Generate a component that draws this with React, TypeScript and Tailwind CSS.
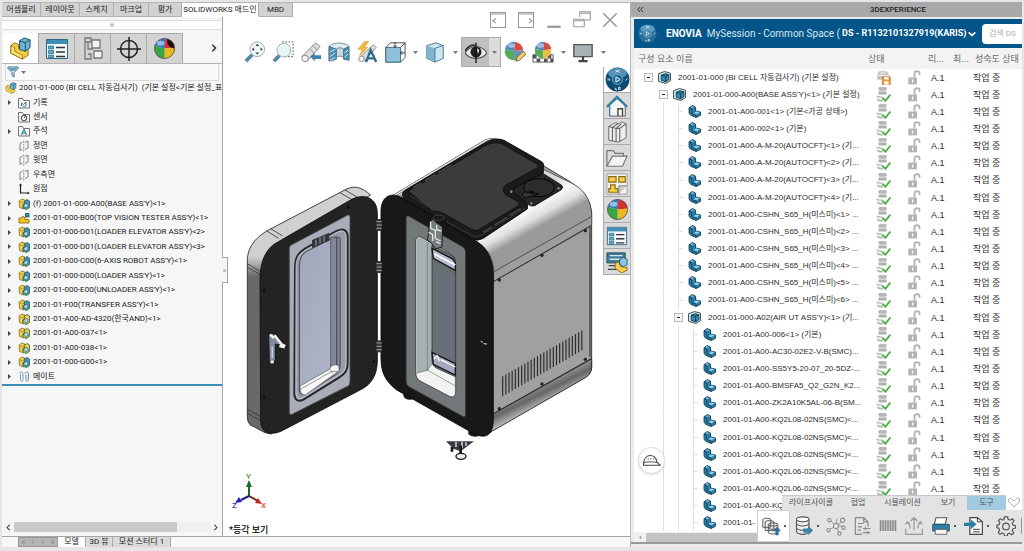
import type { ReactNode } from "react";

const sans = "font-['Roboto','Noto_Sans_CJK_KR',sans-serif]";
const arial = "font-['Liberation_Sans','Noto_Sans_CJK_KR',sans-serif]";

type IconProps = { size?: number; box?: string; children: ReactNode };

const Icon = ({ size = 24, box = "0 0 24 24", children }: IconProps) => (
  <svg
    width={size}
    height={size}
    viewBox={box}
    fill="none"
    className="block shrink-0"
    aria-hidden="true"
  >
    {children}
  </svg>
);

/* ---------- shared icons ---------- */

const PartIcon = ({ size = 24 }: { size?: number }) => (
  <Icon size={size}>
    <path d="M2 9l4-3 4 2v4l5 2 5-2v7l-6 4-12-6z" fill="#f5cf3c" stroke="#8a6d10" />
    <path d="M2 9l4 2v4l8 4v4L2 17z" fill="#fbe37a" stroke="#8a6d10" strokeWidth=".8" />
    <path d="M11 4l5-3 6 2v8l-5 4-6-2z" fill="#6db3d3" stroke="#1c4f6b" />
    <path d="M11 4l6 2v9M17 6l5-3" stroke="#1c4f6b" />
  </Icon>
);

const SubAssemblyIcon = ({ resolved }: { resolved?: boolean }) => (
  <Icon size={12}>
    <path d="M2 6l6-4 6 2 1 6-5 4 1 8-8-3z" fill="#f2cd45" stroke="#7b6318" strokeWidth="1.4" />
    <path d="M4 8l5 2 5-4" stroke="#7b6318" />
    <path d="M12 7l6-4 5 3v13l-6 4-7-3V13l4-1z" fill={resolved ? "#f2cd45" : "#3f94b5"} stroke="#1d4e60" strokeWidth="1.4" />
    <path d="M10 16l6-5 5 2-4 7z" fill="#a8d9ea" stroke="#1d4e60" />
    <path d="M14 22c4 0 7-2 8-6" stroke="#48a23b" strokeWidth="2" />
  </Icon>
);

const TopPartIcon = () => (
  <Icon size={12}>
    <path d="M2 12h5l3-4 4 4v3h8v7H2z" fill="#f2c21f" stroke="#7b6318" strokeWidth="1.6" />
    <path d="M15 3h7v7h-7z" fill="#3f94b5" stroke="#1d4e60" strokeWidth="1.6" />
    <path d="M14 11l4-4" stroke="#1d4e60" strokeWidth="2" />
  </Icon>
);

const FolderIcon = ({ mark }: { mark: "history" | "sensor" | "note" }) => (
  <Icon size={12}>
    <path d="M1 22V3h8l2 4h12v15z" fill="#f4f4f4" stroke="#666" strokeWidth="1.8" />
    {mark === "history" && (
      <path d="M7 18v-6l4 3 5-5v7a4 4 0 01-7 1" stroke="#3c7386" strokeWidth="2" />
    )}
    {mark === "sensor" && (
      <>
        <circle cx="12" cy="14" r="5.5" stroke="#444" strokeWidth="2" />
        <path d="M12 14l3-4" stroke="#444" strokeWidth="2" />
      </>
    )}
    {mark === "note" && (
      <path d="M7 20l5-11 5 11M9 16h6" stroke="#2c7fa0" strokeWidth="2.2" />
    )}
  </Icon>
);

const PlaneIcon = () => (
  <Icon size={12}>
    <path d="M9 4L4 7v14l5-3M14 5l6-3v14l-6 3" stroke="#666" strokeWidth="1.6" />
    <path d="M11.500 1v22" stroke="#666" strokeWidth="1.400" strokeDasharray="4 2" />
  </Icon>
);

const OriginIcon = () => (
  <Icon size={12}>
    <path d="M5 2v18h16" stroke="#222" strokeWidth="2.4" />
    <path d="M2 5l3-4 3 4M19 17l4 3-4 3" fill="#222" />
  </Icon>
);

const MateIcon = () => (
  <Icon size={12}>
    <path d="M3 5c0-4 7-4 7 0v12c0 5-5 5-5 0V7" stroke="#6fa0b8" strokeWidth="2" />
    <path d="M14 5c0-4 7-4 7 0v12c0 5-5 5-5 0V7" stroke="#6c8794" strokeWidth="2" />
  </Icon>
);

const Sphere = ({ size = 22, hole }: { size?: number; hole?: boolean }) => (
  <Icon size={size}>
    <path d="M12 12L2 9A10.500 10.500 0 0113 1.500z" fill="#2e77c9" />
    <path d="M12 12l1-10.500A10.500 10.500 0 0122.500 11z" fill="#d3322d" />
    <path d="M12 12l10.500-1A10.500 10.500 0 0112 22.500z" fill="#e9b920" />
    <path d="M12 12v10.500A10.500 10.500 0 012 9z" fill="#3aa344" />
    {hole && <path d="M15 2c6 2 8 6 7 10-5-1-8-5-7-10z" fill="#1d0f12" />}
    <circle cx="12" cy="12" r="10.500" stroke="#444" strokeWidth=".8" />
    <ellipse cx="8" cy="6.500" rx="4" ry="2.500" fill="#fff" opacity=".5" />
  </Icon>
);

const PropertiesIcon = ({ size = 24 }: { size?: number }) => (
  <Icon size={size}>
    <path d="M1.500 2.500h21v19h-21z" fill="#f4f8fa" stroke="#2b6480" />
    <path d="M2 3h20v4H2z" fill="#3f8fb3" />
    <path d="M3.500 9h5v3h-5zM3.500 13.500h5v3h-5zM3.500 18h5v2.500h-5z" fill="#5ba9c9" stroke="#2b6480" strokeWidth=".7" />
    <path d="M11 10.500h9M11 15h9M11 19.500h9" stroke="#333" strokeWidth="1.500" />
  </Icon>
);

const CompassIcon = ({ size = 24, muted }: { size?: number; muted?: boolean }) => (
  <Icon size={size}>
    <circle cx="12" cy="12" r="11.500" fill={muted ? "#2a6f9b" : "#0f4a70"} />
    <ellipse cx="12" cy="6" rx="9" ry="5" fill="#6fb0d2" opacity=".7" />
    <circle cx="12" cy="12" r="5" fill={muted ? "#3a80aa" : "#1c6b98"} stroke="#7fb9d6" strokeWidth=".7" />
    <path d="M10.500 9.500l4 2.500-4 2.500z" stroke="#fff" strokeWidth=".9" />
    <path d="M10 3l4 2M10 5l4-2M3 11v2M4.500 11v2M20 13l1.500-2M10 20v1.500h1.500M13 19.500h1.500V21.500H13z" stroke="#dceaf2" strokeWidth=".9" />
  </Icon>
);

const Caret = () => (
  <svg width="5" height="3" viewBox="0 0 5 3" aria-hidden="true">
    <path d="M0 0h5L2.500 3z" fill="#777" />
  </svg>
);

/* ---------- feature tree ---------- */

const commandTabs = ["어셈블리", "레이아웃", "스케치", "마크업", "평가", "SOLIDWORKS 애드인", "MBD"];
const commandTabWidths = ["w-[39px]", "w-[39px]", "w-[34px]", "w-[35px]", "w-[33px]", "w-[77px]", "w-[34px]"];

const treeRows: { label: string; icon: ReactNode; arrow?: boolean }[] = [
  { label: "기록", icon: <FolderIcon mark="history" />, arrow: true },
  { label: "센서", icon: <FolderIcon mark="sensor" /> },
  { label: "주석", icon: <FolderIcon mark="note" />, arrow: true },
  { label: "정면", icon: <PlaneIcon /> },
  { label: "윗면", icon: <PlaneIcon /> },
  { label: "우측면", icon: <PlaneIcon /> },
  { label: "원점", icon: <OriginIcon /> },
  { label: "(f) 2001-01-000-A00(BASE ASS'Y)<1>", icon: <SubAssemblyIcon />, arrow: true },
  { label: "2001-01-000-B00(TOP VISION TESTER ASS'Y)<1>", icon: <TopPartIcon />, arrow: true },
  { label: "2001-01-000-D01(LOADER ELEVATOR ASS'Y)<2>", icon: <SubAssemblyIcon />, arrow: true },
  { label: "2001-01-000-D01(LOADER ELEVATOR ASS'Y)<3>", icon: <SubAssemblyIcon />, arrow: true },
  { label: "2001-01-000-C00(6-AXIS ROBOT ASS'Y)<1>", icon: <SubAssemblyIcon />, arrow: true },
  { label: "2001-01-000-D00(LOADER ASS'Y)<1>", icon: <SubAssemblyIcon />, arrow: true },
  { label: "2001-01-000-E00(UNLOADER ASS'Y)<1>", icon: <SubAssemblyIcon />, arrow: true },
  { label: "2001-01-F00(TRANSFER ASS'Y)<1>", icon: <SubAssemblyIcon />, arrow: true },
  { label: "2001-01-A00-AD-4320(한국AND)<1>", icon: <SubAssemblyIcon resolved />, arrow: true },
  { label: "2001-01-A00-037<1>", icon: <SubAssemblyIcon resolved />, arrow: true },
  { label: "2001-01-A00-038<1>", icon: <SubAssemblyIcon resolved />, arrow: true },
  { label: "2001-01-000-G00<1>", icon: <SubAssemblyIcon />, arrow: true },
  { label: "메이트", icon: <MateIcon />, arrow: true },
];

const managerTabs: { name: string; icon: ReactNode }[] = [
  { name: "FeatureManager", icon: <PartIcon size={23} /> },
  { name: "PropertyManager", icon: <PropertiesIcon /> },
  {
    name: "ConfigurationManager",
    icon: (
      <Icon>
        <path d="M4 1h6v4H4zM4 5v17h6v-5H7M7 5v7h5" stroke="#777" strokeWidth="1.300" />
        <path d="M11 3h8v8h-8zM13 14h8v7h-8z" fill="#f4f4f4" stroke="#777" strokeWidth="1.300" />
      </Icon>
    ),
  },
  {
    name: "DimXpertManager",
    icon: (
      <Icon>
        <circle cx="12" cy="12" r="8.500" stroke="#222" strokeWidth="1.500" />
        <path d="M12 0v24M0 12h24" stroke="#222" strokeWidth="1.500" />
      </Icon>
    ),
  },
  { name: "DisplayManager", icon: <Sphere size={23} hole /> },
];

const FeatureTree = () => (
  <aside className="relative z-10 flex w-[221px] shrink-0 flex-col border-r border-[#a5a5a5] bg-[#f6f6f6]">
    <div className="mt-[3px] grid h-[10px] place-items-center border-y border-[#dcdcdc] bg-white">
      <span className="size-1 rounded-full bg-[#c4c4c4]" />
    </div>
    <div className="mt-[3px] flex h-[31px] items-stretch border-b border-[#b5b5b5] pl-[1px]">
      {managerTabs.map((tab, i) => (
        <button
          key={tab.name}
          aria-label={tab.name}
          className={`grid w-[36px] place-items-center border-r border-[#a8a8a8] ${
            i === 0 ? "bg-white" : "border-t bg-[#d3d3d3]"
          }`}
        >
          {tab.icon}
        </button>
      ))}
      <button aria-label="more" className="ml-auto pr-1">
        <Icon size={8}>
          <path d="M7 2l10 10L7 22" stroke="#222" strokeWidth="4" />
        </Icon>
      </button>
    </div>
    <div className="mx-[3px] flex h-[17px] items-center gap-[2px] border border-t-0 border-[#dadada] bg-[#fafafa] pl-[1px]">
      <Icon size={12}>
        <path d="M2 2h20v3l-8 8v9l-4-3v-6L2 5z" fill="#eaf4f8" stroke="#3b6f84" strokeWidth="2" />
        <path d="M3 4h18l-6 6H9z" fill="#56a4c3" />
      </Icon>
      <Caret />
    </div>
    <div className="flex h-[305px] flex-col border-b-2 border-[#3e8fb4] text-[8px] whitespace-nowrap text-[#222]">
      <div className="flex flex-1 items-center gap-[2px] pl-[3px]">
        <PartIcon size={12} />
        <span className="overflow-hidden whitespace-pre">2001-01-000 (BI CELL 자동검사기)  (기본 설정&lt;기본 설정_표시</span>
      </div>
      {treeRows.map((row) => (
        <div key={row.label} className="flex flex-1 items-center gap-[3px] pl-[5px]">
          <svg width="8" height="5" viewBox="0 0 8 5" aria-hidden="true">
            {row.arrow && <path d="M1 0l3 2.500L1 5z" fill="#444" />}
          </svg>
          {row.icon}
          <span>{row.label}</span>
        </div>
      ))}
    </div>
    <div className="mt-auto mb-1 flex h-[10px] items-center gap-[2px] px-[3px]">
      <Icon size={7}>
        <path d="M16 3l-9 9 9 9" stroke="#333" strokeWidth="3.500" />
      </Icon>
      <div className="h-full flex-1 bg-[#f0f0f0]">
        <div className="h-full w-5/6 bg-[#c9c9c9]" />
      </div>
      <Icon size={7}>
        <path d="M8 3l9 9-9 9" stroke="#333" strokeWidth="3.500" />
      </Icon>
    </div>
    <div className="absolute top-[240px] -right-[6px] grid h-[26px] w-[6px] place-items-center border border-l-0 border-[#a5a5a5] bg-[#f6f6f6]">
      <span className="size-[3px] rounded-full bg-[#bbb]" />
    </div>
  </aside>
);

/* ---------- graphics area ---------- */

const windowButtons: { name: string; icon: ReactNode }[] = [
  { name: "left pane", icon: <path d="M2 2h20v20H2zM2 4h20M9 10l-4 3 4 3" stroke="#999" strokeWidth="1.400" /> },
  { name: "right pane", icon: <path d="M2 2h20v20H2zM2 4h20M16 10l4 3-4 3" stroke="#999" strokeWidth="1.400" /> },
  { name: "minimize", icon: <path d="M3 21h18" stroke="#999" strokeWidth="3" /> },
  { name: "restore", icon: <path d="M9 8V1h14v11h-7M1 11h14v10H1zM9 3h14M1 13h14" stroke="#999" strokeWidth="1.400" /> },
  { name: "close", icon: <path d="M3 3l18 18M21 3L3 21" stroke="#999" strokeWidth="2" /> },
];

const viewTools: { name: string; icon?: ReactNode }[] = [
  {
    name: "zoom to fit",
    icon: (
      <>
        <circle cx="14.500" cy="9" r="8" fill="#eff6f8" stroke="#98a8ae" />
        <path d="M9 15l-7 7" stroke="#5389a3" strokeWidth="4" />
        <path d="M14.500 3l2 2.500h-4zM14.500 15l2-2.500h-4zM8.500 9l2.500-2v4zM20.500 9L18 7v4z" fill="#444" />
      </>
    ),
  },
  {
    name: "zoom to area",
    icon: (
      <>
        <path d="M11 1h12v16H12" stroke="#555" strokeDasharray="2 1.500" />
        <circle cx="13" cy="10" r="7.500" fill="#eaf4f6" stroke="#98a8ae" />
        <path d="M8 16l-6 6" stroke="#5389a3" strokeWidth="4" />
      </>
    ),
  },
  {
    name: "previous view",
    icon: (
      <>
        <path d="M2 17L17 2l5 4L8 22z" fill="#dedede" stroke="#888" />
        <circle cx="5.500" cy="19" r="3.500" fill="#f3f3f3" stroke="#888" />
        <path d="M11 9l5 5M14 5l5 5" stroke="#888" />
        <path d="M11 17l5-4v2.500h7v4h-7V22z" fill="#3c83a8" />
      </>
    ),
  },
  {
    name: "section view",
    icon: (
      <>
        <path d="M1 6c4-5 18-5 22 0l-6 3c-2-2-6-2-8 0z" fill="#dfecf2" stroke="#6d8d9b" />
        <path d="M9 9c2-2 6-2 8 0v9c-2-2-6-2-8 0z" fill="#c9d8df" stroke="#6d8d9b" />
        <path d="M1 6l8 3v11l-8 2zM17 9l6-3v15l-6-1z" fill="#4b8eb0" stroke="#44748a" />
        <path d="M2 12l6-3M2 17l6-4M2 21l6-3M18 13l4-3M18 18l4-4" stroke="#e4f1f6" />
      </>
    ),
  },
  {
    name: "annotation views",
    icon: (
      <>
        <path d="M10 0L2 9h5l-3 7 9-9H9l5-7z" fill="#f3bb3b" stroke="#c98d18" strokeWidth=".6" />
        <path d="M5 17L19 4l3 3L9 22z" fill="#dedede" stroke="#888" />
        <circle cx="6" cy="19.500" r="3" fill="#f3f3f3" stroke="#888" />
        <path d="M11 23l5-13 6 13M13 19h7" stroke="#2f6c8f" strokeWidth="2.600" />
      </>
    ),
  },
  {
    name: "view orientation",
    icon: (
      <>
        <path d="M2 7l5-5h16v16l-5 5H2z" fill="#fff" stroke="#444" />
        <path d="M2 7h16v16H2z" fill="#8fc1d8" stroke="#3b6f84" />
        <path d="M18 7l5-5M12 1v6M10 5l2 2 2-2M23 13h-5M20 11l-2 2 2 2" stroke="#333" />
      </>
    ),
  },
  { name: "orientation menu" },
  {
    name: "display style",
    icon: (
      <>
        <path d="M3 5l10-3 8 3v14l-9 4-9-4z" fill="#cfe6f0" stroke="#40748b" />
        <path d="M3 5l9 3v15l-9-4z" fill="#7fb6d0" />
        <path d="M12 8l9-3M12 8v15" stroke="#40748b" />
      </>
    ),
  },
  { name: "style menu" },
];

const appearanceTools: { name: string; icon?: ReactNode }[] = [
  {
    name: "edit appearance",
    icon: (
      <>
        <path d="M11 11L1 9A10 10 0 0112 1z" fill="#4b87c6" />
        <path d="M11 11l1-10a10 10 0 019 9z" fill="#d64c46" />
        <path d="M11 11l10-1a10 10 0 01-10 11z" fill="#6592c4" />
        <path d="M11 11v10A10 10 0 011 9z" fill="#54ab59" />
        <ellipse cx="8" cy="5" rx="4" ry="2.500" fill="#fff" opacity=".45" />
        <path d="M13 22l1-4 7-7 3 3-7 7z" fill="#f1cd63" stroke="#6e5a20" />
      </>
    ),
  },
  {
    name: "apply scene",
    icon: (
      <>
        <path d="M1 15h22v8H1z" fill="#fff" stroke="#555" />
        <path d="M1 15h4v4H1zM9 15h4v4H9zM17 15h4v4h-4zM5 19h4v4H5zM13 19h4v4h-4zM20 19h3v4h-3z" fill="#555" />
        <path d="M12 10L3 9a9 9 0 0110-8z" fill="#4b87c6" />
        <path d="M12 10l1-9a9 9 0 018 8z" fill="#d64c46" />
        <path d="M12 10l9-1a9 9 0 01-9 10z" fill="#e8bf43" />
        <path d="M12 10v9a9 9 0 01-9-10z" fill="#54ab59" />
        <ellipse cx="9" cy="5" rx="4" ry="2.500" fill="#fff" opacity=".45" />
      </>
    ),
  },
  { name: "scene menu" },
  {
    name: "view settings",
    icon: (
      <>
        <path d="M2 4h20v13H2z" fill="#a9b1b4" stroke="#555" strokeWidth="1.500" />
        <path d="M12 17v4M7 22h10" stroke="#444" strokeWidth="2.400" />
      </>
    ),
  },
  { name: "settings menu" },
];

const ViewTool = ({ name, icon }: { name: string; icon?: ReactNode }) =>
  icon ? (
    <button aria-label={name} className="grid h-[30px] w-7 place-items-center">
      <Icon size={22}>{icon}</Icon>
    </button>
  ) : (
    <button aria-label={name} className="grid h-[30px] w-3 place-items-center">
      <Caret />
    </button>
  );

const slots = Array.from({ length: 26 }, (_, i) => i);

const Model = () => (
  <svg
    width="378"
    height="400"
    viewBox="223 67 378 400"
    fill="none"
    className="block shrink-0"
    role="img"
    aria-label="assembly model"
  >
    <defs>
      <linearGradient id="roundTop" x1="470" y1="210" x2="520" y2="300" gradientUnits="userSpaceOnUse">
        <stop offset="0" stopColor="#d8d8d8" />
        <stop offset=".35" stopColor="#fafafa" />
        <stop offset=".7" stopColor="#e0e0e0" />
        <stop offset="1" stopColor="#9a9a9a" />
      </linearGradient>
      <linearGradient id="doorSide" x1="0" y1="380" x2="0" y2="440" gradientUnits="userSpaceOnUse">
        <stop offset="0" stopColor="#d0d0d0" />
        <stop offset="1" stopColor="#696969" />
      </linearGradient>
      <linearGradient id="glass" x1="0" y1="0" x2="1" y2="1">
        <stop offset="0" stopColor="#a0a6bb" />
        <stop offset="1" stopColor="#b2b8cb" />
      </linearGradient>
      <linearGradient id="lowEdge" x1="470" y1="790" x2="500" y2="850" gradientUnits="userSpaceOnUse">
        <stop offset="0" stopColor="#a2a2a2" />
        <stop offset=".5" stopColor="#666" />
        <stop offset="1" stopColor="#bbb" />
      </linearGradient>
    </defs>

    {/* open door, three units per pixel */}
    <g transform="translate(240 130) scale(.33333)" strokeWidth="2.500">
      <path d="M22 385C26 345 50 322 80 303L318 178C345 165 365 172 392 195L100 350L62 430L70 895L95 912L75 908L30 884Q22 876 22 860Z" fill="url(#doorSide)" stroke="#222" />
      <path d="M80 303l36 22M92 296l36 22M300 188l38 22M315 180l38 22M23 402l38 22M23 412l38 22M23 838l39 22M23 850l39 22" stroke="#333" />
      <path d="M60 450C60 390 80 352 115 335L335 208C375 188 412 205 412 250V690C412 725 402 755 370 775L125 903C85 920 62 905 62 870Z" fill="#232323" stroke="#0c0c0c" />
      <path d="M148 355Q148 348 154 345L322 256Q330 252 330 262V755Q330 765 324 768L156 853Q148 856 148 846Z" fill="#a9adb8" stroke="#4b4e57" />
      <path d="M165 415C165 380 175 368 195 356L290 303C312 292 323 302 323 322V700C323 722 315 732 298 742L195 806C175 820 163 810 163 790Z" fill="#989da9" stroke="#26282e" strokeWidth="6" />
      <path d="M168 415C168 384 178 372 197 360L288 308C309 297 318 305 318 322V698C318 718 312 726 296 736L196 799C178 812 168 806 168 786Z" stroke="#dfe2ea" strokeWidth="2" />
      <path d="M178 405Q180 375 200 364L282 322Q300 316 300 335V705Q300 725 290 732L194 792Q178 798 178 780Z" fill="url(#glass)" stroke="#33353b" />
      <path d="M272 322h18v382l-18 12zM290 325l10-3v386l-10-4z" fill="#82879a" stroke="#41444f" strokeWidth="2" />
      <path d="M180 768L268 718Q274 700 296 706L298 722L196 795Q180 796 180 768Z" fill="#f7f7f7" stroke="#555" strokeWidth="2" />
      <path d="M184 776l92-52 18 0M268 716l10 14" stroke="#666" strokeWidth="2" />
      <path d="M216 330l52-22v24l-52 22z" fill="#34363b" />
      <path d="M228 330v16M240 322v18M252 318v18" stroke="#9fa3ae" strokeWidth="3" />
      <path d="M86 614q8-8 16-2l8 10 18 14-4 10-18-4v48q-8 18-18 10z" fill="#858b9e" stroke="#15171a" strokeWidth="3" />
      <path d="M104 616l20 26 12 6M93 696h8M90 614l12 10M118 648l16 4" stroke="#f3f3f6" strokeWidth="7" />
      <path d="M97 650v34" stroke="#c9cde0" strokeWidth="5" />
      <g fill="#0c0c0c">
        <circle cx="72" cy="482" r="4" />
        <circle cx="72" cy="802" r="4" />
        <circle cx="325" cy="232" r="4" />
        <circle cx="402" cy="695" r="4" />
      </g>
    </g>

    {/* cabinet */}
    <g transform="translate(370 125) scale(.33333)" strokeWidth="2.500">
      <path d="M62 215L345 45Q370 35 400 50L600 170Q660 205 665 262V725Q664 745 648 756L350 925L310 340Z" fill="#a0a0a0" stroke="#222" />
      <path d="M62 215L345 45Q365 38 380 44L110 205Z" fill="#dadada" />
      <path d="M78 212L360 46" stroke="#777" />
      <path d="M312 345L520 133L600 172C650 195 665 235 665 275L372 440Q370 375 312 345Z" fill="url(#roundTop)" stroke="#444" />
      <path d="M372 440L665 275V300L370 470Z" fill="#9d9d9d" stroke="#555" />
      <path d="M370 470L665 302M370 866L665 700" stroke="#333" strokeWidth="3" />
      <path d="M368 868L665 702V728Q664 746 648 757L352 927Z" fill="url(#lowEdge)" stroke="#222" />
      <path d="M660 305v392" stroke="#555" strokeWidth="5" />
      {slots.map((i) => (
        <path
          key={i}
          d={`M${398 + i * 9.5} ${754 - i * 5.5}v${60}`}
          stroke="#2b2b2b"
          strokeWidth="3.500"
        />
      ))}
      <g fill="#222">
        <circle cx="388" cy="465" r="5" />
        <circle cx="516" cy="391" r="5" />
        <circle cx="646" cy="317" r="5" />
        <circle cx="388" cy="851" r="5" />
        <circle cx="516" cy="777" r="5" />
        <circle cx="646" cy="703" r="5" />
      </g>

      <path d="M100 790v22q4 12 20 12t18-8v-14zM295 910v18q10 10 30 6l5-16z" fill="#1b1b1b" />
      <path d="M33 260C33 215 60 198 100 220L312 345C352 365 370 405 370 455V880C370 930 350 945 310 925L80 795C48 770 33 745 33 700Z" fill="#181818" stroke="#060606" />

      {/* recessed port beside the lid */}
      <path d="M400 186L500 146q10-4 20 0l54 34q8 6 0 14l-80 48q-10 4-20-4l-72-40z" fill="#262626" stroke="#0c0c0c" />
      <ellipse cx="507" cy="188" rx="46" ry="27" fill="#2c2c2c" stroke="#050505" strokeWidth="3" />
      <path d="M456 208q4-10 16-6l34 4-34 12q-14 2-16-10z" fill="#333" stroke="#050505" />
      <path d="M476 196l18 4-8 8z" fill="#050505" />
      <circle cx="566" cy="190" r="4" fill="#777" />
      <circle cx="484" cy="235" r="4" fill="#777" />

      {/* lid with the cut-out corner */}
      <path d="M98 212Q95 202 105 196L350 50Q376 36 402 46L515 110Q524 116 520 130V144L432 190Q424 196 432 204L466 230Q476 238 472 252L340 340Q322 350 305 342L225 292L185 270L105 225Z" fill="#1b1b1b" stroke="#050505" />
      <path d="M115 198L345 62Q372 48 395 56L502 118Q508 124 500 130L408 180Q392 192 406 208L444 230Q452 238 442 244L330 312Q318 320 305 313L225 268Q205 256 186 258Z" fill="#3b3b3b" stroke="#0d0d0d" />
      <path d="M130 188l24-14M165 167l32-19M205 143l40-24M340 322l26-16M374 300l36-22M418 272l34-21" stroke="#4a4a4a" strokeWidth="4" />
      <path d="M120 212l60 36M230 290l76 42q14 6 30-2l130-82" stroke="#3a3a3a" strokeWidth="3" />
      <circle cx="424" cy="200" r="4" fill="#888" />

      {/* front window */}
      <path d="M108 280Q108 268 120 275L278 365Q287 370 287 382V868Q287 880 277 874L118 786Q108 780 108 768Z" fill="#727879" stroke="#2b2d2d" />
      <path d="M137 350Q137 332 152 336L240 385Q257 395 257 410V800Q257 820 240 815L150 768Q137 760 137 742Z" fill="#f2f3f3" stroke="#333" />
      <path d="M139 350Q139 334 152 338L186 358V715L172 738L139 745Z" fill="#a7b0b0" />
      <path d="M172 352V735" stroke="#6c7474" strokeWidth="2" />
      <path d="M186 360L240 388Q256 396 256 410V755L200 730Q186 722 186 705Z" fill="#666e70" stroke="#222" strokeWidth="2" />
      <path d="M196 430L256 450V740L196 700Z" fill="#6c7080" opacity=".5" />
      <path d="M186 370L240 398Q256 406 256 418V436L190 400Z" fill="#b8bfd4" stroke="#15161a" strokeWidth="4" />
      <path d="M192 386l64 34" stroke="#fff" strokeWidth="5" />
      <path d="M186 682L256 716V750L190 718Z" fill="#a4aabd" stroke="#15161a" strokeWidth="4" />
      <path d="M192 702l10-10 6 16M212 704l44 22" stroke="#fff" strokeWidth="4" />
      <path d="M139 745l33-10 84 48M172 738l14-22M256 755v50" stroke="#777" strokeWidth="2" />
      <path d="M178 290l12-8 8 10 20 14-2 60-20 6-12-18-12-8 4-20z" fill="#777c7c" stroke="#111" />
      <path d="M182 290v20l14 6v24l16 8M176 322l12 6v20M200 300v14l14 4M198 350l14 6" stroke="#e1e5e5" strokeWidth="4" />
      <ellipse cx="206" cy="278" rx="17" ry="8" fill="#191919" stroke="#444" />
      <path d="M332 648l6 4M340 656h8v4" stroke="#a5a5a5" strokeWidth="4" />

      {/* hinges */}
      {[282, 408, 646].map((y) => (
        <g key={y}>
          <path d={`M20 ${y}h14v36H20z`} fill="#3a3a3a" />
          <path d={`M19 ${y + 8}h17M19 ${y + 18}h17M19 ${y + 28}h17`} stroke="#9b9b9b" strokeWidth="3" />
        </g>
      ))}

      {/* caster under the cabinet */}
      <path d="M228 949h84l-40 30-22-8z" fill="#3a3b40" />
      <path d="M258 950v16M276 950v20M288 952v10" stroke="#c4c7d6" strokeWidth="5" />
      <path d="M272 962v26M246 966v14" stroke="#17181a" strokeWidth="8" />
      <ellipse cx="273" cy="994" rx="15" ry="9" fill="#f1f1f1" stroke="#111" strokeWidth="4" />
    </g>
  </svg>
);

const Triad = () => (
  <svg width="44" height="42" viewBox="0 -2 44 42" aria-hidden="true">
    <path d="M20 24v-10" stroke="#1c6b25" strokeWidth="2" />
    <path d="M20 24l9 5" stroke="#7a1f1f" strokeWidth="2" />
    <path d="M20 24l-8 4" stroke="#1d1d7a" strokeWidth="2" />
    <path d="M20 8l3 7h-6z" fill="#1c6b25" />
    <path d="M33 32l-7-1 3-5z" fill="#c62424" />
    <path d="M6 31l4-6 3 5z" fill="#2525b8" />
    <text x="17" y="7" fontSize="8" fill="#4b8b50">Y</text>
    <text x="32" y="36" fontSize="8" fill="#e05252">X</text>
    <text x="3" y="36" fontSize="8" fill="#3c3ccf">Z</text>
  </svg>
);

const taskPane: { name: string; icon: ReactNode }[] = [
  { name: "3DEXPERIENCE", icon: <CompassIcon size={25} /> },
  {
    name: "home",
    icon: (
      <Icon size={22}>
        <path d="M4 11v12h17V11L12 4z" fill="#f5f5f5" stroke="#555" />
        <path d="M1 13L12 2l11 11" stroke="#2f7fa5" strokeWidth="2.500" />
        <path d="M13 23v-8h5v8" stroke="#444" strokeWidth="1.500" />
        <path d="M4 12v11" stroke="#2f7fa5" />
      </Icon>
    ),
  },
  {
    name: "design library",
    icon: (
      <Icon size={22}>
        <path d="M3 6l7-4 4 1 3-2 5 2v15l-8 5-11-2z" fill="#eee" stroke="#666" />
        <path d="M3 6l4 1v15M7 7l6-4M7 7l4 1v15M11 8l6-5M11 8l4 0v15M15 8l7-5" stroke="#666" strokeWidth="1.200" />
      </Icon>
    ),
  },
  {
    name: "file explorer",
    icon: (
      <Icon size={22}>
        <path d="M1 21V4h7l2 3h9v4" fill="#ddd" stroke="#777" strokeWidth="1.300" />
        <path d="M1 21L7 10h16l-5 11z" fill="#f3f3f3" stroke="#777" strokeWidth="1.300" />
      </Icon>
    ),
  },
  {
    name: "view palette",
    icon: (
      <Icon size={22}>
        <path d="M1 1h22v22H1z" fill="#f4f4f4" stroke="#999" />
        <path d="M3 4h8v6H3zM14 4h7v6h-7zM5 13h5v4h3v4H3v-4h2z" fill="#f5cf4b" stroke="#866b12" strokeWidth="1.200" />
        <path d="M14 23v-9h9" fill="#ccc" stroke="#777" />
      </Icon>
    ),
  },
  { name: "appearances", icon: <Sphere size={23} /> },
  { name: "custom properties", icon: <PropertiesIcon size={22} /> },
  {
    name: "forum",
    icon: (
      <Icon size={22}>
        <path d="M1 2h20v11H1z" fill="#3f7d9b" stroke="#2a4b5b" />
        <path d="M4 5h14M4 9h14" stroke="#d7e5ec" strokeWidth="1.500" />
        <path d="M3 16h10M2 20h10" stroke="#444" strokeWidth="1.500" />
        <path d="M10 13l4-1 2 5 7 1v3l-6 3-7-5z" fill="#f5cf4b" stroke="#866b12" />
        <path d="M15 9l4-2 4 2v6l-4 2-4-2z" fill="#8cc7df" stroke="#2a5c74" />
      </Icon>
    ),
  },
];

const GraphicsArea = () => (
  <main className="relative flex min-w-0 flex-1 flex-col overflow-hidden bg-white pt-5">
    <div className="flex shrink-0 pl-[18px]">
      {viewTools.map((tool) => (
        <ViewTool key={tool.name} {...tool} />
      ))}
      <div className="flex h-[30px] border border-[#aaa]">
        <button aria-label="hide items" className="grid w-[27px] place-items-center bg-[#bfbfbf]">
          <Icon size={22}>
            <path d="M0 13C6 4 18 4 24 13 18 21 6 21 0 13z" fill="#eee" stroke="#555" strokeWidth="1.300" />
            <circle cx="12" cy="12" r="6" fill="#222" />
            <path d="M12 2v22" stroke="#111" strokeWidth="1.500" />
            <path d="M13 8q4 2 1 6z" fill="#eee" />
            <path d="M0 11C5 4 8 4 11 5" stroke="#333" strokeWidth="2" />
          </Icon>
        </button>
        <button aria-label="hide menu" className="grid w-[11px] place-items-center bg-[#dcdcdc]">
          <Caret />
        </button>
      </div>
      {appearanceTools.map((tool) => (
        <ViewTool key={tool.name} {...tool} />
      ))}
    </div>
    <div className="flex min-h-0 flex-1 justify-between">
      <Model />
      <nav className="flex w-[27px] shrink-0 flex-col self-start border-l border-[#aaa]">
        {taskPane.map((tab, i) => (
          <button
            key={tab.name}
            aria-label={tab.name}
            className={`grid h-[26px] place-items-center border-b border-[#aaa] ${
              i === 0 ? "bg-white" : "bg-[#dadada]"
            }`}
          >
            {tab.icon}
          </button>
        ))}
      </nav>
    </div>
    <div className="absolute bottom-0 left-[6px] flex flex-col gap-3 text-[9px] font-medium text-black">
      <Triad />
      <span className="leading-3">*등각 보기</span>
    </div>
  </main>
);

const CadWindow = () => (
  <section className="relative flex min-w-0 flex-col bg-white">
    <nav className="flex h-[15px] items-stretch border-t border-[#b5b5b5] text-[8px] text-[#222]">
      {commandTabs.map((tab, i) => (
        <button
          key={tab}
          className={`border-r border-b border-[#b0b0b0] whitespace-nowrap ${commandTabWidths[i]} ${
            i === 5 ? "border-b-white bg-white" : "bg-[#d2d2d2]"
          }`}
        >
          {tab}
        </button>
      ))}
    </nav>
    <div className="flex min-h-0 flex-1">
      <FeatureTree />
      <GraphicsArea />
    </div>
    <div className="flex h-[11px] items-stretch border-t border-[#a5a5a5] bg-[#f7f7f7] text-[8px] leading-[10px] text-[#222]">
      <div className="ml-4 flex w-[40px] items-center justify-around border border-[#999] bg-[#b5b5b5]">
        {["M17 4L9 12l8 8M6 4v16", "M16 4l-8 8 8 8", "M8 4l8 8-8 8", "M7 4l8 8-8 8M18 4v16"].map((d) => (
          <Icon key={d} size={6}>
            <path d={d} stroke="#888" strokeWidth="3" />
          </Icon>
        ))}
      </div>
      <button className="w-[27px] bg-white">모델</button>
      <button className="w-[28px] border-x border-[#aaa] bg-[#dadada]">3D 뷰</button>
      <button className="w-[58px] border-r border-[#aaa] bg-[#dadada] whitespace-nowrap">모션 스터디 1</button>
    </div>
    <div className="absolute top-[9px] right-[6px] flex">
      {windowButtons.map((button) => (
        <button key={button.name} aria-label={button.name} className="grid w-7 place-items-center">
          <Icon size={18}>{button.icon}</Icon>
        </button>
      ))}
    </div>
  </section>
);

/* ---------- 3DEXPERIENCE pane ---------- */

type Item = { name: string; depth: number; open?: boolean; pending?: boolean };

const items: Item[] = [
  { name: "2001-01-000 (BI CELL 자동검사기) (기본 설정)", depth: 0, open: true },
  { name: "2001-01-000-A00(BASE ASS'Y)<1> (기본 설정)", depth: 1, open: true },
  { name: "2001-01-A00-001<1> (기본<가공 상태>)", depth: 2 },
  { name: "2001-01-A00-002<1> (기본)", depth: 2 },
  { name: "2001-01-A00-A-M-20(AUTOCFT)<1> (기...", depth: 2 },
  { name: "2001-01-A00-A-M-20(AUTOCFT)<2> (기...", depth: 2 },
  { name: "2001-01-A00-A-M-20(AUTOCFT)<3> (기...", depth: 2 },
  { name: "2001-01-A00-A-M-20(AUTOCFT)<4> (기...", depth: 2 },
  { name: "2001-01-A00-CSHN_S65_H(미스미)<1> ...", depth: 2 },
  { name: "2001-01-A00-CSHN_S65_H(미스미)<2> ...", depth: 2 },
  { name: "2001-01-A00-CSHN_S65_H(미스미)<3> ...", depth: 2 },
  { name: "2001-01-A00-CSHN_S65_H(미스미)<4> ...", depth: 2 },
  { name: "2001-01-A00-CSHN_S65_H(미스미)<5> ...", depth: 2 },
  { name: "2001-01-A00-CSHN_S65_H(미스미)<6> ...", depth: 2 },
  { name: "2001-01-000-A02(AIR UT ASS'Y)<1> (기...", depth: 2, open: true },
  { name: "2001-01-A00-006<1> (기본)", depth: 3 },
  { name: "2001-01-A00-AC30-02E2-V-B(SMC)...", depth: 3 },
  { name: "2001-01-A00-SS5Y5-20-07_20-5DZ-...", depth: 3 },
  { name: "2001-01-A00-BMSFA5_Q2_G2N_K2...", depth: 3 },
  { name: "2001-01-A00-ZK2A10K5AL-06-B(SM...", depth: 3 },
  { name: "2001-01-A00-KQ2L08-02NS(SMC)<...", depth: 3 },
  { name: "2001-01-A00-KQ2L08-02NS(SMC)<...", depth: 3 },
  { name: "2001-01-A00-KQ2L08-02NS(SMC)<...", depth: 3 },
  { name: "2001-01-A00-KQ2L06-02NS(SMC)<...", depth: 3 },
  { name: "2001-01-A00-KQ2L06-02NS(SMC)<...", depth: 3 },
  { name: "2001-01-A00-KQ", depth: 3, pending: true },
  { name: "2001-01-", depth: 3, pending: true },
];

const ProductIcon = () => (
  <Icon size={13}>
    <path d="M1 5l11-4 11 3v14l-9 5-13-4z" fill="#d6e6ee" stroke="#3a4b55" strokeWidth="1.800" />
    <path d="M6 8l7-3 7 2v9l-6 4-8-3z" fill="#3689b0" stroke="#123d54" strokeWidth="1.800" />
    <path d="M6 8l8 2 6-3M14 10v10" stroke="#123d54" strokeWidth="1.800" />
  </Icon>
);

const LeafIcon = () => (
  <Icon size={13}>
    <path d="M2 5l6-4 6 3v7l9 2v6l-8 4-10-4-3-4z" fill="#2b7fa8" stroke="#14425a" strokeWidth="1.800" />
    <path d="M2 5l5 3v8l8 3v4" stroke="#14425a" strokeWidth="1.800" />
    <path d="M10 15l5-3 7 1-6 4z" fill="#8fd0ea" />
    <path d="M4 4l4-2 4 2-4 2z" fill="#6db4d3" />
  </Icon>
);

const StatusIcon = ({ modified }: { modified: boolean }) => (
  <Icon size={15}>
    {modified ? (
      <>
        <path d="M5 2h12l4 6v7H2V8z" fill="#bdbdbd" />
        <path d="M2 9h19M6 5h10" stroke="#fff" strokeWidth="1.500" />
        <path d="M10 11h13v12H10z" fill="#e8962e" stroke="#b86e14" />
        <path d="M13 11h7v4h-7zM13 18h7v5h-7z" fill="#fff" />
      </>
    ) : (
      <>
        <rect x="4" y="0" width="13" height="6" rx="2" fill="#b8b8b8" />
        <rect x="4" y="7" width="13" height="5" rx="1" fill="#aeaeae" />
        <path d="M1 13q3 3 9 2v2q-6 1-9-1zM2 18q3 3 9 2v3q-7 1-9-2z" fill="#b3b3b3" />
        <path d="M10 17l5 5 8-10" stroke="#4cae45" strokeWidth="3" />
      </>
    )}
  </Icon>
);

const LockIcon = () => (
  <Icon size={15}>
    <path d="M2 12h14v11H2z" fill="#b4b4b4" />
    <path d="M12 12V5q0-3 4-3t4 3v3" stroke="#b4b4b4" strokeWidth="3" />
    <path d="M8 15h2v5H8z" fill="#fff" />
  </Icon>
);

const NameCell = ({ item }: { item: Item }) => (
  <div className="flex h-[17px] items-center overflow-hidden pl-[7px] whitespace-nowrap">
    {Array.from({ length: item.depth }, (_, k) => (
      <span key={k} className="flex h-full w-[15px] shrink-0 justify-center">
        {k > 0 && <span className="w-px bg-[#dedede]" />}
      </span>
    ))}
    {item.open ? (
      <button
        aria-label="collapse"
        className="mx-[3px] grid size-[9px] shrink-0 place-items-center border border-[#bbb] bg-[#f7f7f7]"
      >
        <span className="h-px w-[3px] bg-[#222]" />
      </button>
    ) : (
      <span className="flex h-full w-[15px] shrink-0 items-center pl-[7px]">
        <span className="h-full w-px bg-[#dedede]" />
        <span className="h-px w-1 bg-[#dedede]" />
      </span>
    )}
    <span className="mr-[7px] ml-[2px]">
      {item.open ? <ProductIcon /> : <LeafIcon />}
    </span>
    {item.name}
  </div>
);

const ItemTable = () => (
  <table className="w-full table-fixed border-collapse text-left text-[8px] leading-[16px] text-[#2c2c2c]">
    <colgroup>
      <col className="w-[234px]" />
      <col className="w-[34px]" />
      <col className="w-[24px]" />
      <col className="w-[25px]" />
      <col className="w-[22px]" />
      <col />
    </colgroup>
    <thead>
      <tr className="h-[21px] bg-[#f3f3f3] text-[9px] whitespace-nowrap text-[#6a6a6a] *:p-0 *:font-normal">
        <th className="!pl-1">구성 요소 이름</th>
        <th>상태</th>
        <th aria-label="잠금" />
        <th className="!pl-[2px]">리...</th>
        <th className="!pl-[2px]">최...</th>
        <th className="!pl-[2px]">성숙도 상태</th>
      </tr>
    </thead>
    <tbody>
      {items.map((item, i) => (
        <tr key={i} className={`${i % 7 === 6 ? "h-[18px]" : "h-[17px]"} *:p-0`}>
          <td>
            <NameCell item={item} />
          </td>
          <td className="!pl-2">{!item.pending && <StatusIcon modified={i === 0} />}</td>
          <td className="!pl-[5px]">{!item.pending && <LockIcon />}</td>
          <td className="!pl-[5px] text-[9px]">{!item.pending && "A.1"}</td>
          <td />
          <td className="text-[9px]">{!item.pending && "작업 중"}</td>
        </tr>
      ))}
    </tbody>
  </table>
);

const actionTabs: { label: string; width: string }[] = [
  { label: "라이프사이클", width: "w-[58px]" },
  { label: "협업", width: "w-[36px]" },
  { label: "시뮬레이션", width: "w-[53px]" },
  { label: "보기", width: "w-[38px]" },
  { label: "도구", width: "w-[39px]" },
];

const actions: { name: string; icon: ReactNode; menu?: boolean }[] = [
  {
    name: "save",
    menu: true,
    icon: (
      <>
        <path d="M1 3c2-2 8-2 10 0v10H1zM4 6c2-2 9-2 11 0v11H4zM8 9c2-2 10-2 12 0v11c-2 2-10 2-12 0z" fill="#f2f2f2" stroke="#555" strokeWidth="1.200" />
        <path d="M8 10c2 2 10 2 12 0M8 14c2 2 10 2 12 0" stroke="#555" strokeWidth="1.200" />
        <path d="M17 23v-5h-3l5-6 5 6h-3v5z" fill="#2d7194" />
      </>
    ),
  },
  {
    name: "export",
    menu: true,
    icon: (
      <>
        <path d="M3 4v15c2 4 13 4 15 0V4" fill="#f2f2f2" stroke="#555" strokeWidth="1.300" />
        <ellipse cx="10.500" cy="4" rx="7.500" ry="3" fill="#fff" stroke="#555" strokeWidth="1.300" />
        <path d="M3 9c2 4 13 4 15 0M3 14c2 4 13 4 15 0" stroke="#555" strokeWidth="1.300" />
        <path d="M11 15h6v-3l6 5-6 6v-3h-6z" fill="#3c83a8" />
      </>
    ),
  },
  {
    name: "relations",
    icon: (
      <>
        <path d="M12 12L4 4M12 12l8-6M12 12l-9 5M12 12l4 9M12 12h9M12 12L13 3" stroke="#999" strokeWidth="1.200" />
        <g fill="#ececec" stroke="#8a8a8a" strokeWidth="1.300">
          <circle cx="12" cy="12" r="3" />
          <circle cx="4" cy="5" r="2" />
          <circle cx="20" cy="5" r="2.500" />
          <circle cx="3" cy="17" r="2" />
          <circle cx="16" cy="21" r="2" />
          <circle cx="21" cy="14" r="2" />
        </g>
      </>
    ),
  },
  {
    name: "compare",
    icon: (
      <path d="M12 22H4V2h10l5 5v6M14 2v5h5M7 9h7M7 13h5M7 17h4M13 15h9M13 20h9M16 13v4M19 18v4" stroke="#8a8a8a" strokeWidth="1.400" />
    ),
  },
  {
    name: "barcode",
    icon: (
      <>
        <path d="M2 5h20v13H2z" fill="#cfcfcf" />
        <path d="M3 5v13M6 5v13M9 5v13M12 5v13M15 5v13M18 5v13M21 5v13" stroke="#888" strokeWidth="1.700" />
      </>
    ),
  },
  {
    name: "share",
    icon: (
      <path d="M2 15v7h20v-7M12 17V2M8 6l4-4 4 4M7 15q1-5-3-7M2 10l2-3 3 2M17 15q-1-5 3-7M17 9l3-2 2 3" stroke="#999" strokeWidth="1.400" />
    ),
  },
  {
    name: "print",
    menu: true,
    icon: (
      <>
        <path d="M6 2h13l-2 8H4z" fill="#fff" stroke="#555" strokeWidth="1.300" />
        <path d="M2 10h20v8H2z" fill="#2f7fa5" stroke="#1d4e67" />
        <path d="M5 16h14v6H5z" fill="#f4f4f4" stroke="#555" />
      </>
    ),
  },
  {
    name: "import",
    menu: true,
    icon: (
      <>
        <path d="M7 2h9l6 5v15H7z" fill="#fafafa" stroke="#444" strokeWidth="1.400" />
        <path d="M16 2v5h6M11 16h8M11 19h8" stroke="#444" strokeWidth="1.200" />
        <path d="M0 8h8V4l7 6-7 6v-4H0z" fill="#2f7fa5" />
      </>
    ),
  },
  {
    name: "settings",
    icon: (
      <>
        <path d="M10 1h4l.6 3 2.400 1L19.600 3.400l2 2.200L19.500 9l1 2 3 .6v2.800l-3 .8-1 2.200 1.800 2.800-2.400 2.200-2.700-1.800-2.200 1-.6 2.400h-3.200l-.6-2.600-2.200-1-2.700 1.600-2-2.200L4.400 17l-1-2.200L1 14v-3l2.600-.6 1-2.400L3 5.400 5.200 3.200 8 5l1.600-1z" stroke="#555" strokeWidth="1.400" />
        <circle cx="12" cy="12.500" r="4" stroke="#555" strokeWidth="1.400" />
      </>
    ),
  },
];

const ActionBar = () => (
  <div className="absolute right-0 bottom-[5px] flex flex-col items-end">
    <div className="flex h-[15px] items-stretch">
      <div className="flex border-t border-[#c9c9c9] bg-[#e3e3e3] text-[8px] text-[#555]">
        {actionTabs.map((tab, i) => (
          <button
            key={tab.label}
            className={`${tab.width} whitespace-nowrap ${i === 4 ? "bg-[#a3cbe0]" : ""}`}
          >
            {tab.label}
          </button>
        ))}
      </div>
      <button aria-label="collapse bar" className="w-4 bg-white pl-[2px]">
        <Icon size={12}>
          <path d="M1 9V4l4-2 7 6 7-6 4 2v5L12 20z" stroke="#999" strokeWidth="1.500" />
        </Icon>
      </button>
    </div>
    <div className="flex h-[32px] w-[265px] items-stretch bg-[#e3e3e3]">
      {actions.map((action, i) => (
        <button
          key={action.name}
          aria-label={action.name}
          className={`flex items-center ${
            action.menu ? "w-[33px] gap-[3px] pl-1" : "w-[26px] justify-center"
          } ${i === 0 ? "border border-[#d0d0d0] bg-white" : ""}`}
        >
          <Icon size={i === 0 ? 19 : 20}>{action.icon}</Icon>
          {action.menu && <span className="size-[2px] shrink-0 rounded-full bg-[#222]" />}
        </button>
      ))}
      <span className="my-2 ml-auto w-px bg-[#999]" />
    </div>
  </div>
);

const ExperiencePane = () => (
  <section className="relative flex min-w-0 flex-col overflow-hidden border-l border-[#b5b5b5] bg-[#ececec]">
    <header className="flex h-[15px] items-center bg-[#a9a9ab] text-[8px] font-medium text-[#222]">
      <button aria-label="collapse pane" className="pl-[6px]">
        <Icon size={7}>
          <path d="M11 3l-8 9 8 9M21 3l-8 9 8 9" stroke="#222" strokeWidth="3" />
        </Icon>
      </button>
      <h1 className="flex-1 pl-[130px] text-center">3DEXPERIENCE</h1>
    </header>
    <div className="mt-[2px] ml-[3px] flex min-h-0 flex-1 flex-col bg-white">
      <div className="flex h-[29px] shrink-0 items-center overflow-hidden bg-[#04568a] pl-1 text-[10px] whitespace-nowrap text-[#d6e6f0]">
        <CompassIcon size={19} muted />
        <b className="ml-[9px] text-white">ENOVIA</b>
        <span className="ml-[5px]">MySession - Common Space (</span>
        <b className="ml-[2px] text-[9px] text-white">DS - R1132101327919(KARIS)</b>
        <span className="ml-[2px]">
          <Icon size={8}>
            <path d="M2 7l10 9 10-9" stroke="#fff" strokeWidth="5" />
          </Icon>
        </span>
        <input
          aria-label="검색"
          placeholder="검색 DS"
          className="ml-auto h-5 w-10 shrink-0 rounded-l-sm bg-white pl-[7px] text-[8px] placeholder:text-[#b0b0b0]"
        />
      </div>
      <div className={`relative min-h-0 flex-1 overflow-hidden ${arial}`}>
        <ItemTable />
      </div>
      <div className="flex h-[10px] shrink-0 items-center bg-[#f1f1f1] pl-[3px]">
        <Icon size={7}>
          <path d="M15 5l-8 7 8 7z" fill="#999" />
        </Icon>
        <div className="ml-[2px] h-[9px] w-1/2 bg-[#c3c3c3]" />
      </div>
    </div>
    <div className="h-[5px] border-t-2 border-[#999]" />
    <ActionBar />
    <button
      aria-label="assistant"
      className="absolute bottom-[73px] left-[7px] grid size-[27px] place-items-center rounded-full border border-[#ddd] bg-white shadow"
    >
      <Icon size={19}>
        <path d="M2 17C2 3 17 2 19 14l4 4H2z" stroke="#444" strokeWidth="1.400" />
        <path d="M2 14.500c5-1 12-1 17 0M7 10h1.500M10.500 10H12M14 10h1.500" stroke="#444" strokeWidth="1.200" />
      </Icon>
    </button>
  </section>
);

const App = () => {
  return (
    <div className={`grid h-screen grid-cols-[628fr_392fr] bg-[#e6e6e6] px-[2px] pt-[2px] pb-1 ${sans}`}>
      <CadWindow />
      <ExperiencePane />
    </div>
  );
};

export default App;
